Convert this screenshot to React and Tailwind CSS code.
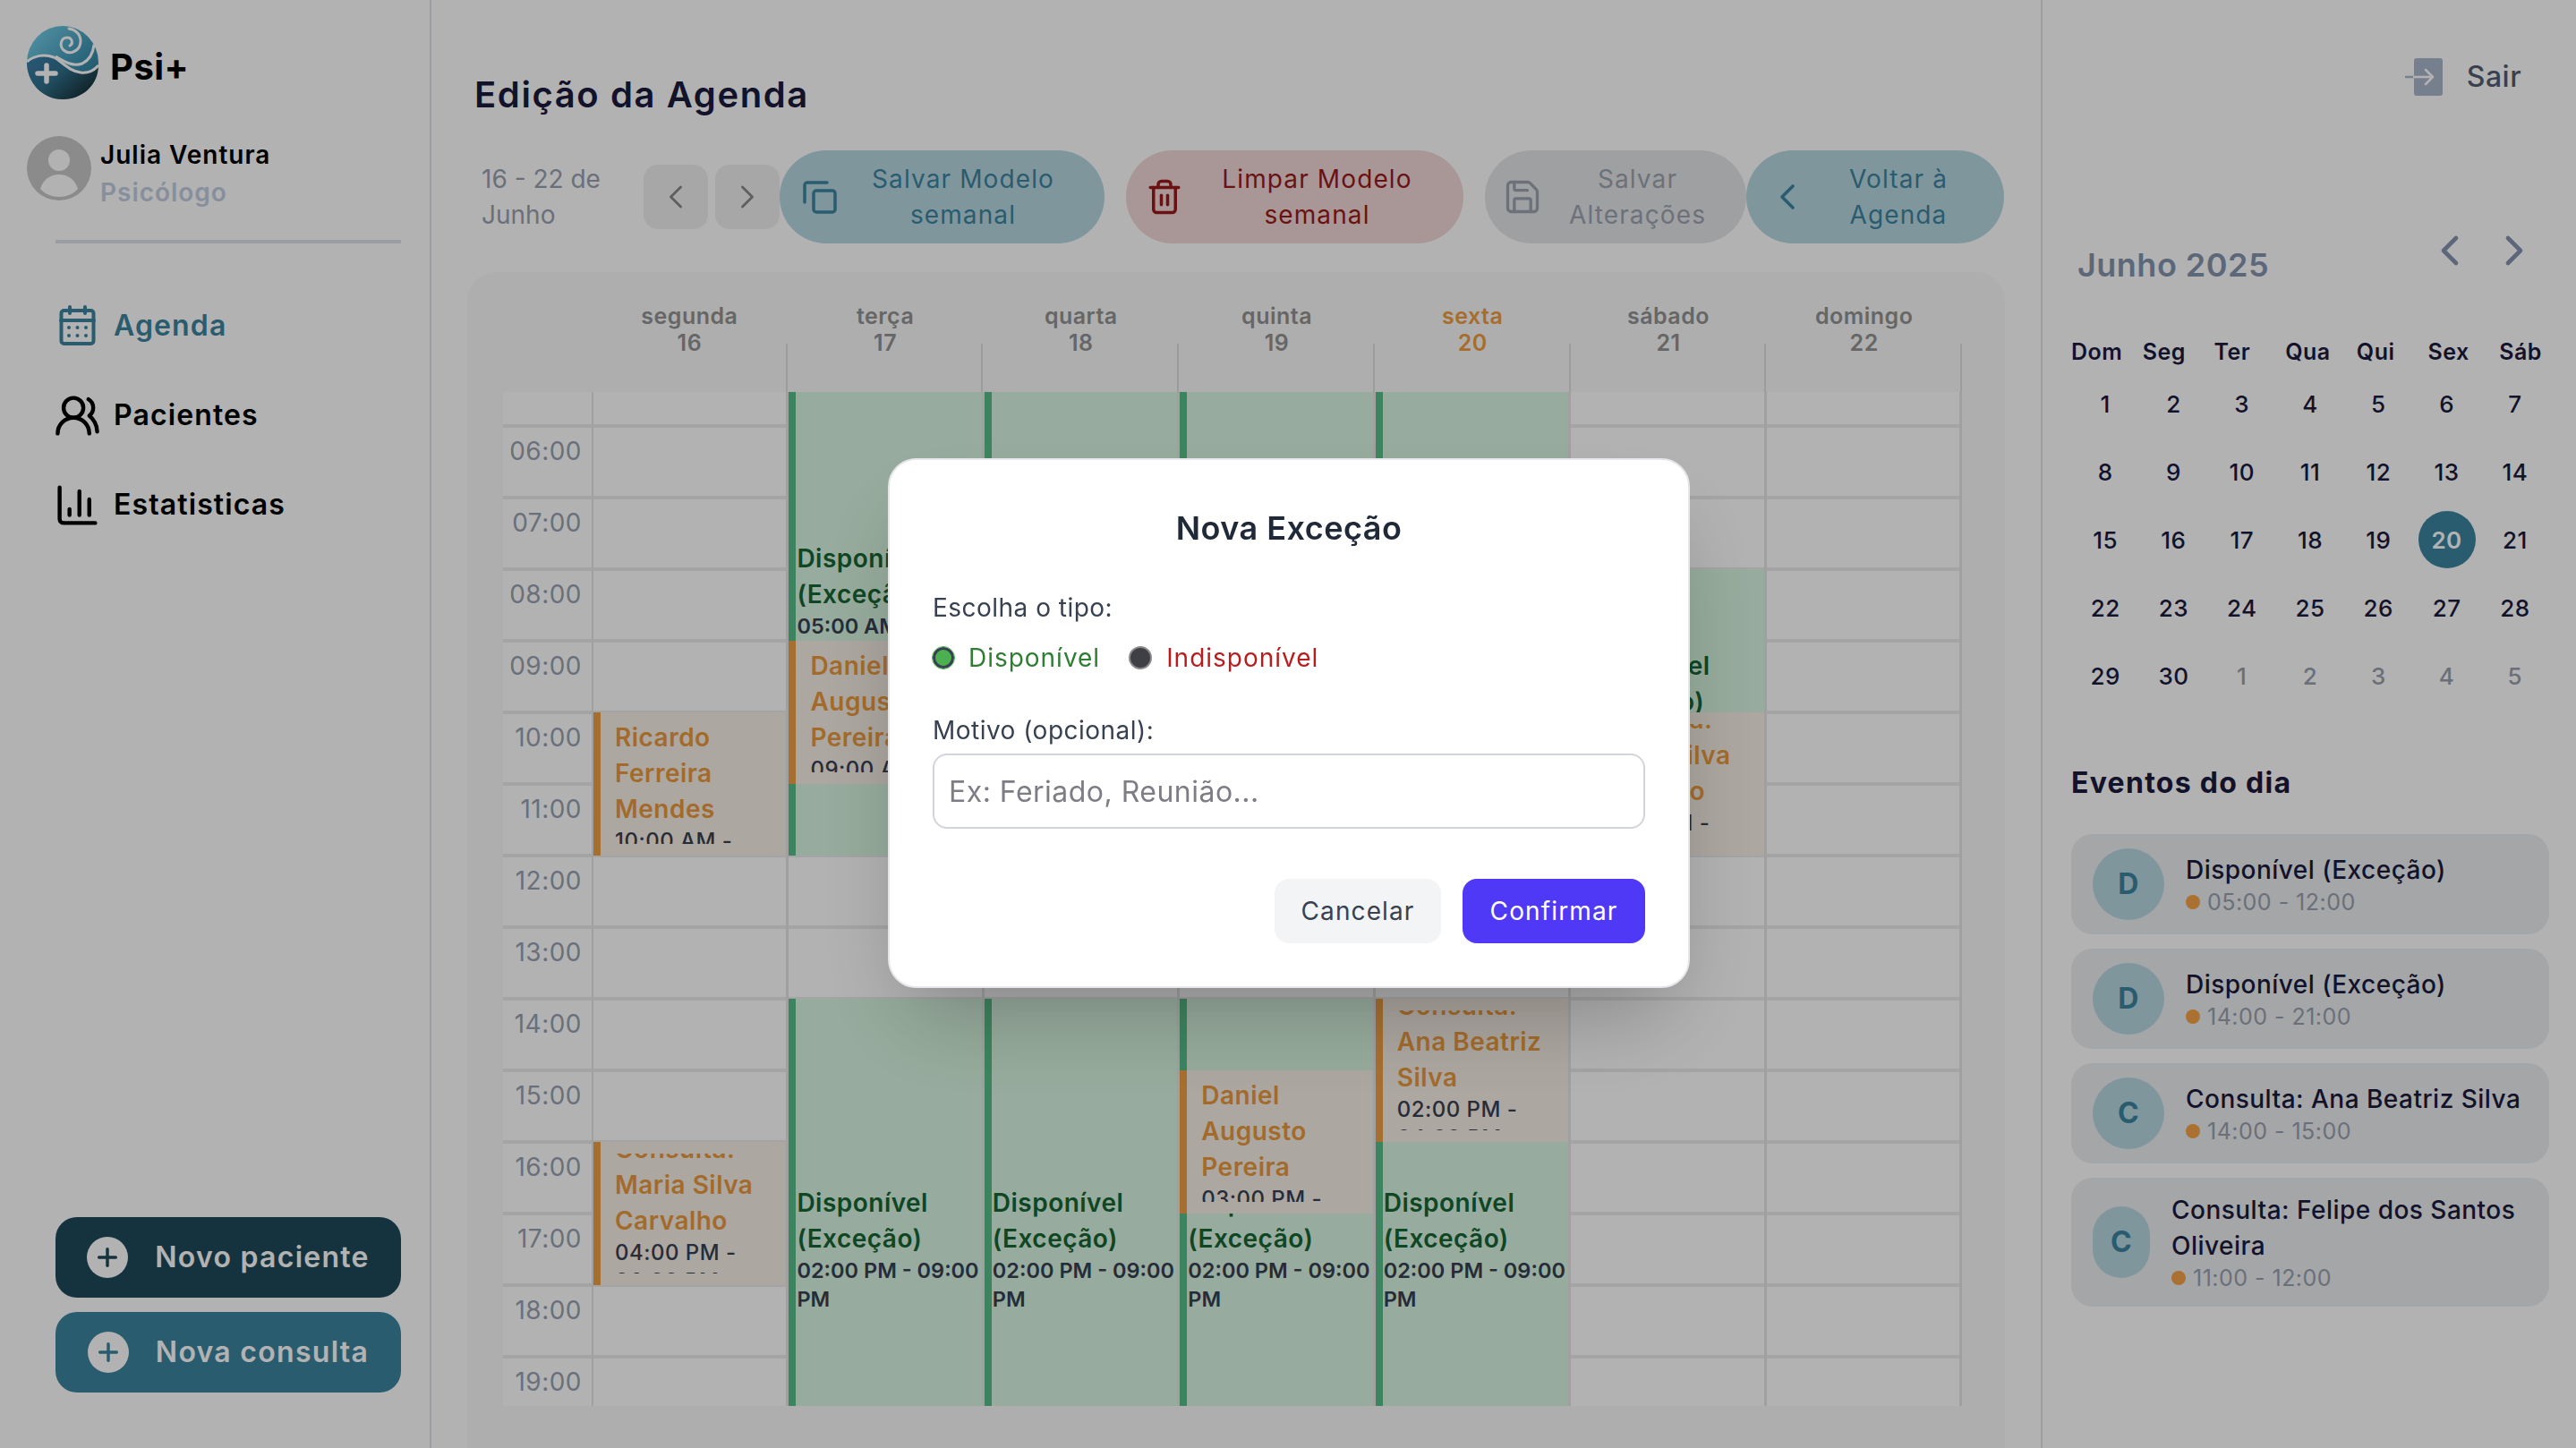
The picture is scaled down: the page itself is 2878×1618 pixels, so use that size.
import { ChevronLeft, ChevronRight, ChartColumn, UsersRound, Trash2, Save, Plus } from "lucide-react";

const HOURS = [5, 6, 7, 8, 9, 10, 11, 12, 13, 14, 15, 16, 17, 18, 19, 20];
const ROW = 80;

const DAYS = [
  { name: "segunda", num: 16 },
  { name: "terça", num: 17 },
  { name: "quarta", num: 18 },
  { name: "quinta", num: 19 },
  { name: "sexta", num: 20, today: true },
  { name: "sábado", num: 21 },
  { name: "domingo", num: 22 },
];

const free = (from, to, time) => ({ type: "free", from, to, title: "Disponível (Exceção)", time });
const appt = (from, to, title, time) => ({ type: "appt", from, to, title: `Consulta: ${title}`, time });

const morning = free(5, 12, "05:00 AM - 12:00 PM");
const afternoon = free(14, 21, "02:00 PM - 09:00 PM");

const EVENTS = [
  [
    appt(10, 12, "Ricardo Ferreira Mendes", "10:00 AM - 12:00 PM"),
    appt(16, 18, "Maria Silva Carvalho", "04:00 PM - 06:00 PM"),
  ],
  [morning, appt(9, 11, "Daniel Augusto Pereira", "09:00 AM - 11:00 AM"), afternoon],
  [morning, afternoon],
  [morning, afternoon, appt(15, 17, "Daniel Augusto Pereira", "03:00 PM - 05:00 PM")],
  [morning, afternoon, appt(14, 16, "Ana Beatriz Silva", "02:00 PM - 04:00 PM")],
  [free(8, 12, "08:00 AM - 12:00 PM"), appt(10, 12, "Maria Silva Carvalho", "10:00 AM - 12:00 PM")],
  [],
];

const WEEK = ["Dom", "Seg", "Ter", "Qua", "Qui", "Sex", "Sáb"];
const MONTH = [
  1, 2, 3, 4, 5, 6, 7, 8, 9, 10, 11, 12, 13, 14, 15, 16, 17, 18, 19, 20, 21, 22, 23, 24, 25, 26, 27, 28, 29, 30,
];

const DAY_EVENTS = [
  { letter: "D", title: "Disponível (Exceção)", time: "05:00 - 12:00" },
  { letter: "D", title: "Disponível (Exceção)", time: "14:00 - 21:00" },
  { letter: "C", title: "Consulta: Ana Beatriz Silva", time: "14:00 - 15:00" },
  { letter: "C", title: "Consulta: Felipe dos Santos Oliveira", time: "11:00 - 12:00", narrow: true },
];

function Logo() {
  return (
    <svg width="80" height="82" viewBox="0 0 80 82" className="shrink-0">
      <defs>
        <linearGradient id="sea" x1="0" y1="0" x2="1" y2="1">
          <stop offset="0" stopColor="#7ad6ee" />
          <stop offset="0.65" stopColor="#3b8fae" />
          <stop offset="1" stopColor="#2a6f86" />
        </linearGradient>
        <linearGradient id="deep" x1="0" y1="0" x2="1" y2="0.7">
          <stop offset="0" stopColor="#3d7fab" />
          <stop offset="0.5" stopColor="#2f6f8a" />
          <stop offset="1" stopColor="#173036" />
        </linearGradient>
      </defs>
      <ellipse cx="40" cy="41" rx="40" ry="41" fill="url(#sea)" />
      <path
        d="M0 40C8 33 20 31 30 35C40 40 46 50 60 52C68 53 75 50 80 44C80 66 62 82 40 82C18 82 0 64 0 40Z"
        fill="url(#deep)"
      />
      <path d="M0 40C8 33 20 31 30 35C40 40 46 50 60 52C68 53 75 50 80 44" fill="none" stroke="#fff" strokeWidth="3" />
      <path d="M32 34C42 40 52 46 62 42C70 38 74 30 75 21" fill="none" stroke="#fff" strokeWidth="3" />
      <path
        d="M48 22C52 20 51 13 45 13C38 13 36 22 41 27C48 33 60 28 60 17C60 9 54 4 47 3"
        fill="none"
        stroke="#fff"
        strokeWidth="3"
        strokeLinecap="round"
      />
      <path d="M22 44V62M12 53H32" stroke="#fff" strokeWidth="5.5" strokeLinecap="round" />
    </svg>
  );
}

function Avatar() {
  return (
    <svg width="72" height="72" viewBox="0 0 72 72" className="shrink-0">
      <circle cx="36" cy="36" r="36" fill="#c8c8c8" />
      <circle cx="36" cy="27" r="12" fill="#fff" />
      <path d="M15 59C18 49 26 43 36 43C46 43 54 49 57 59C52 65 44 68 36 68C28 68 20 65 15 59Z" fill="#fff" />
    </svg>
  );
}

function CalendarIcon() {
  return (
    <svg width="53" height="53" viewBox="0 0 53 53" fill="none" stroke="#3b85a0" strokeWidth="4" strokeLinecap="round">
      <rect x="8.5" y="9" width="36" height="37" rx="3" />
      <path d="M8 20H45M18 5V12M35 5V12" />
      <g fill="#3b85a0" stroke="none">
        <circle cx="17" cy="28" r="2" />
        <circle cx="26.5" cy="28" r="2" />
        <circle cx="36" cy="28" r="2" />
        <circle cx="17" cy="37" r="2" />
        <circle cx="26.5" cy="37" r="2" />
        <circle cx="36" cy="37" r="2" />
      </g>
    </svg>
  );
}

function CopyIcon() {
  return (
    <svg width="38" height="37" viewBox="0 0 38 37" fill="none" stroke="#3b85a0" strokeWidth="3.5" strokeLinecap="round" className="shrink-0">
      <rect x="12" y="11" width="24" height="24" rx="3" />
      <path d="M2 24V5C2 3 3.5 2 5 2H27" />
    </svg>
  );
}

function ExitIcon() {
  return (
    <svg width="42" height="42" viewBox="0 0 42 42" fill="none" strokeWidth="2.5" strokeLinecap="round" strokeLinejoin="round">
      <rect x="10" y="0" width="32" height="42" rx="3" fill="#aab7cc" />
      <path d="M0 21H10" stroke="#aab7cc" />
      <path d="M10 21H30M23 13L31 21L23 29" stroke="#fff" />
    </svg>
  );
}

function PlusBadge({ color }) {
  return (
    <span className="flex h-[46px] w-[46px] shrink-0 items-center justify-center rounded-full bg-white">
      <Plus size={32} strokeWidth={2.6} color={color} />
    </span>
  );
}

function NavItem({ icon, label, active }) {
  return (
    <div className="flex h-[100px] items-center gap-[14px] pl-[60px]">
      {icon}
      <span className={`text-[32px] font-semibold tracking-[0.035em] ${active ? "text-[#3b85a0]" : "text-black"}`}>{label}</span>
    </div>
  );
}

function Sidebar() {
  return (
    <aside className="flex h-full w-[482px] shrink-0 flex-col border-r-2 border-[#e2e4ed] pb-[62px] pt-[29px]">
      <div className="flex items-center gap-[13px] pl-[30px]">
        <Logo />
        <span className="mt-[10px] text-[40px] font-bold leading-none text-black">Psi+</span>
      </div>
      <div className="mt-[41px] flex items-start gap-[10px] pl-[30px]">
        <Avatar />
        <div className="text-[28px] font-semibold tracking-[0.035em]">
          <div className="leading-[42px] text-black">Julia Ventura</div>
          <div className="leading-[42px] text-[#c3cde0]">Psicólogo</div>
        </div>
      </div>
      <div className="ml-[62px] mr-[32px] mt-[32px] h-1 bg-[#dde1ea]" />
      <nav className="mt-[42px] flex flex-col">
        <NavItem active label="Agenda" icon={<CalendarIcon />} />
        <NavItem label="Pacientes" icon={<UsersRound size={53} color="#000" />} />
        <NavItem label="Estatisticas" icon={<ChartColumn size={53} color="#000" />} />
      </nav>
      <div className="ml-[62px] mr-[32px] mt-auto flex flex-col gap-4 text-[32px] font-semibold tracking-[0.04em] text-white">
        <button className="flex h-[90px] items-center justify-center gap-[30px] rounded-3xl bg-[#1f4a59]">
          <PlusBadge color="#1f4a59" />
          Novo paciente
        </button>
        <button className="flex h-[90px] items-center justify-center gap-[30px] rounded-3xl bg-[#3b85a0]">
          <PlusBadge color="#3b85a0" />
          Nova consulta
        </button>
      </div>
    </aside>
  );
}

function Toolbar() {
  return (
    <div className="flex h-[104px] items-center text-[28px] leading-[40px] tracking-[0.04em]">
      <div className="w-[197px] shrink-0 pl-[16px] tracking-normal text-[#99a1af]">16 - 22 de Junho</div>
      <button className="flex h-[72px] w-[72px] shrink-0 items-center justify-center rounded-2xl bg-[#f0f0f1]">
        <ChevronLeft size={44} strokeWidth={1.6} color="#8a8a8a" />
      </button>
      <button className="ml-2 flex h-[72px] w-[72px] shrink-0 items-center justify-center rounded-2xl bg-[#f0f0f1]">
        <ChevronRight size={44} strokeWidth={1.6} color="#8a8a8a" />
      </button>
      <button className="flex h-[104px] w-[363px] shrink-0 items-center rounded-[52px] bg-[#b7d8e0] pl-[26px] pr-[17px] text-[#3b85a0]">
        <CopyIcon />
        <span className="flex-1 text-center">Salvar Modelo semanal</span>
      </button>
      <button className="ml-6 flex h-[104px] w-[377px] shrink-0 items-center rounded-[52px] bg-[#f3d7d7] pl-[22px] pr-[14px] text-[#991b1b]">
        <Trash2 size={42} className="shrink-0" />
        <span className="flex-1 text-center">Limpar Modelo semanal</span>
      </button>
      <button className="ml-6 flex h-[104px] w-[292px] shrink-0 items-center rounded-[52px] bg-[#e3e5e9] pl-[20px] pr-[15px] text-[#9ca3af]">
        <Save size={44} strokeWidth={1.8} className="shrink-0" />
        <span className="flex-1 text-center">Salvar Alterações</span>
      </button>
      <button className="flex h-[104px] w-[288px] shrink-0 items-center rounded-[52px] bg-[#b7d8e0] pl-[22px] pr-[18px] text-[#3b85a0]">
        <ChevronLeft size={48} strokeWidth={1.8} className="shrink-0" />
        <span className="flex-1 text-center">Voltar à Agenda</span>
      </button>
    </div>
  );
}

function EventBlock({ event }) {
  const box = { top: (event.from - 5) * ROW, height: (event.to - event.from) * ROW };
  if (event.type === "free") {
    return (
      <div
        className="absolute left-0 right-0 flex flex-col justify-center overflow-hidden border-l-8 border-[#57be89] bg-[#d9f7e2] pl-px"
        style={box}
      >
        <div className="text-[28px] font-semibold leading-[40px] text-[#166534]">{event.title}</div>
        <div className="text-[23.5px] font-semibold leading-[32px] tracking-normal text-[#374151]">{event.time}</div>
      </div>
    );
  }
  return (
    <div className="absolute left-0 right-0 border-l-8 border-[#f0a044] bg-[#f8efe7] py-[13px] pl-4 pr-2" style={box}>
      <div className="flex h-full flex-col justify-center overflow-hidden">
        <div className="text-[28px] font-semibold leading-[40px] text-[#ea9a3e]">{event.title}</div>
        <div className="text-[24px] font-medium leading-[32px] text-[#374151]">{event.time}</div>
      </div>
    </div>
  );
}

function WeekGrid() {
  return (
    <div className="h-full flex-1 overflow-hidden rounded-t-[32px] bg-[#f9fafb] pl-[40px] pr-[48px]">
      <div className="flex h-[134px]">
        <div className="w-[99px] shrink-0" />
        {DAYS.map((day) => (
          <div
            key={day.num}
            className={`relative min-w-0 flex-1 pt-[34px] text-center text-[25px] font-semibold leading-[30px] ${
              day.today ? "text-[#f09d41]" : "text-[#929292]"
            }`}
          >
            <div>{day.name}</div>
            <div>{day.num}</div>
            <span className="absolute bottom-0 right-0 h-[54px] w-[2px] bg-[#e0e0e0]" />
          </div>
        ))}
      </div>
      <div className="h-[1133px] overflow-hidden bg-white">
        <div className="-mt-[42px] flex">
          <div className="w-[99px] shrink-0">
            {HOURS.map((h) => (
              <div
                key={h}
                className="h-20 border-y-2 border-[#ebebeb] pr-[11px] pt-[6px] text-right text-[28px] leading-[40px] text-[#99a1af]"
              >
                {String(h).padStart(2, "0")}:00
              </div>
            ))}
          </div>
          {DAYS.map((day, i) => (
            <div key={day.num} className={`relative min-w-0 flex-1 border-r-[3px] border-[#e5e5e5] ${i === 0 ? "border-l-2" : ""}`}>
              {HOURS.map((h) => (
                <div key={h} className="h-20 border-y-2 border-[#ebebeb]" />
              ))}
              {EVENTS[i].map((event) => (
                <EventBlock key={event.title + event.from} event={event} />
              ))}
            </div>
          ))}
        </div>
      </div>
    </div>
  );
}

function MonthCalendar() {
  return (
    <div>
      <div className="mt-[146px] flex h-[68px] items-start justify-between pr-[11px]">
        <h2 className="mt-[20px] pl-[7px] text-[36px] font-semibold leading-[48px] text-[#8595ae]">Junho 2025</h2>
        <div className="flex gap-4 text-[#8595ae]">
          <ChevronLeft size={56} />
          <ChevronRight size={56} />
        </div>
      </div>
      <div className="mt-[57px] grid w-[558px] grid-cols-7 text-[25px] font-semibold leading-[32px] text-[#1a1a3e]">
        {WEEK.map((w) => (
          <div key={w}>{w}</div>
        ))}
      </div>
      <div className="mt-[10px] grid grid-cols-7 gap-y-3 text-[26px] font-medium text-[#1a1a3e]">
        {MONTH.map((d) => (
          <div
            key={d}
            className={`mx-auto flex h-16 w-16 items-center justify-center rounded-full ${
              d === 20 ? "bg-[#3b85a0] font-semibold text-white" : ""
            }`}
          >
            {d}
          </div>
        ))}
        {[1, 2, 3, 4, 5].map((d) => (
          <div key={d} className="mx-auto flex h-16 w-16 items-center justify-center text-[#99a1af]">
            {d}
          </div>
        ))}
      </div>
    </div>
  );
}

function DayEvent({ event }) {
  return (
    <div className="flex items-center gap-6 rounded-3xl bg-[#eceef0] px-6 py-4">
      <div
        className={`flex h-20 shrink-0 items-center justify-center rounded-full bg-[#b7d8e0] text-[32px] font-bold text-[#3b85a0] ${
          event.narrow ? "w-16" : "w-20"
        }`}
      >
        {event.letter}
      </div>
      <div className="min-w-0">
        <div className="text-[28px] font-medium leading-[40px] text-[#1a1a3e]">{event.title}</div>
        <div className="flex items-center gap-2 text-[25px] leading-[32px] text-[#99a1af]">
          <span className="h-4 w-4 rounded-full bg-[#f4a349]" />
          {event.time}
        </div>
      </div>
    </div>
  );
}

function RightPanel() {
  return (
    <aside className="h-full w-[598px] shrink-0 border-l-2 border-[#e2e4ed] pl-8 pr-[30px] pt-[66px]">
      <div className="mr-[31px] flex h-10 items-center justify-end gap-[27px] text-[32px] font-medium text-[#525e72]">
        <ExitIcon />
        Sair
      </div>
      <MonthCalendar />
      <h3 className="mt-[64px] text-[32px] font-bold leading-[48px] tracking-[0.04em] text-[#1a1a3e]">Eventos do dia</h3>
      <div className="mt-[33px] flex flex-col gap-4">
        {DAY_EVENTS.map((event) => (
          <DayEvent key={event.title + event.time} event={event} />
        ))}
      </div>
    </aside>
  );
}

function ExceptionModal() {
  return (
    <div className="fixed inset-0 flex items-center justify-center bg-black/30">
      <div className="mb-[2px] ml-[2px] h-[592px] w-[896px] rounded-[32px] border-2 border-[#e5e7eb] bg-white p-12 pt-[50px] shadow-[0_50px_100px_-24px_rgba(0,0,0,0.25)]">
        <h2 className="text-center text-[36px] font-semibold leading-[52px] text-[#1f2937]">Nova Exceção</h2>
        <div className="mt-[43px] text-[28px] leading-[40px] text-[#374151]">Escolha o tipo:</div>
        <div className="mt-[16px] flex h-[40px] items-center text-[28px] tracking-[0.035em]">
          <label className="flex items-center gap-4 text-[#2e7d32]">
            <input
              type="radio"
              name="tipo"
              defaultChecked
              className="h-[24px] w-[24px] appearance-none rounded-full border-[3px] border-[#374151] bg-[#4caf50] outline-1 outline-[#4caf50]"
            />
            Disponível
          </label>
          <label className="ml-[32px] flex items-center gap-4 text-[#b91c1c]">
            <input
              type="radio"
              name="tipo"
              className="h-[26px] w-[26px] appearance-none rounded-full border-2 border-[#8a8a8a] bg-[#3f3f46]"
            />
            Indisponível
          </label>
        </div>
        <div className="mt-[41px] text-[28px] leading-[40px] text-[#374151]">Motivo (opcional):</div>
        <input
          placeholder="Ex: Feriado, Reunião..."
          className="mt-[6px] h-[84px] w-full rounded-2xl border-2 border-[#d1d5db] px-4 text-[32px] outline-none placeholder:text-[#7d7d85]"
        />
        <div className="mt-[56px] flex justify-end gap-6 text-[28px] tracking-[0.04em]">
          <button className="h-[72px] w-[186px] rounded-2xl bg-[#f3f4f6] text-[#374151]">Cancelar</button>
          <button className="h-[72px] w-[204px] rounded-2xl bg-[#4f39f6] text-white">Confirmar</button>
        </div>
      </div>
    </div>
  );
}

export default function App() {
  return (
    <div className="flex h-screen overflow-hidden bg-white font-['Inter',sans-serif] tracking-[0.03em]">
      <Sidebar />
      <main className="flex h-full min-w-0 flex-1 flex-col pl-[40px] pr-[40px] pt-[76px]">
        <h1 className="ml-2 text-[40px] font-semibold leading-[60px] tracking-[0.04em] text-[#1a1a3e]">Edição da Agenda</h1>
        <div className="mt-8">
          <Toolbar />
        </div>
        <div className="mt-8 min-h-0 flex-1">
          <WeekGrid />
        </div>
      </main>
      <RightPanel />
      <ExceptionModal />
    </div>
  );
}
